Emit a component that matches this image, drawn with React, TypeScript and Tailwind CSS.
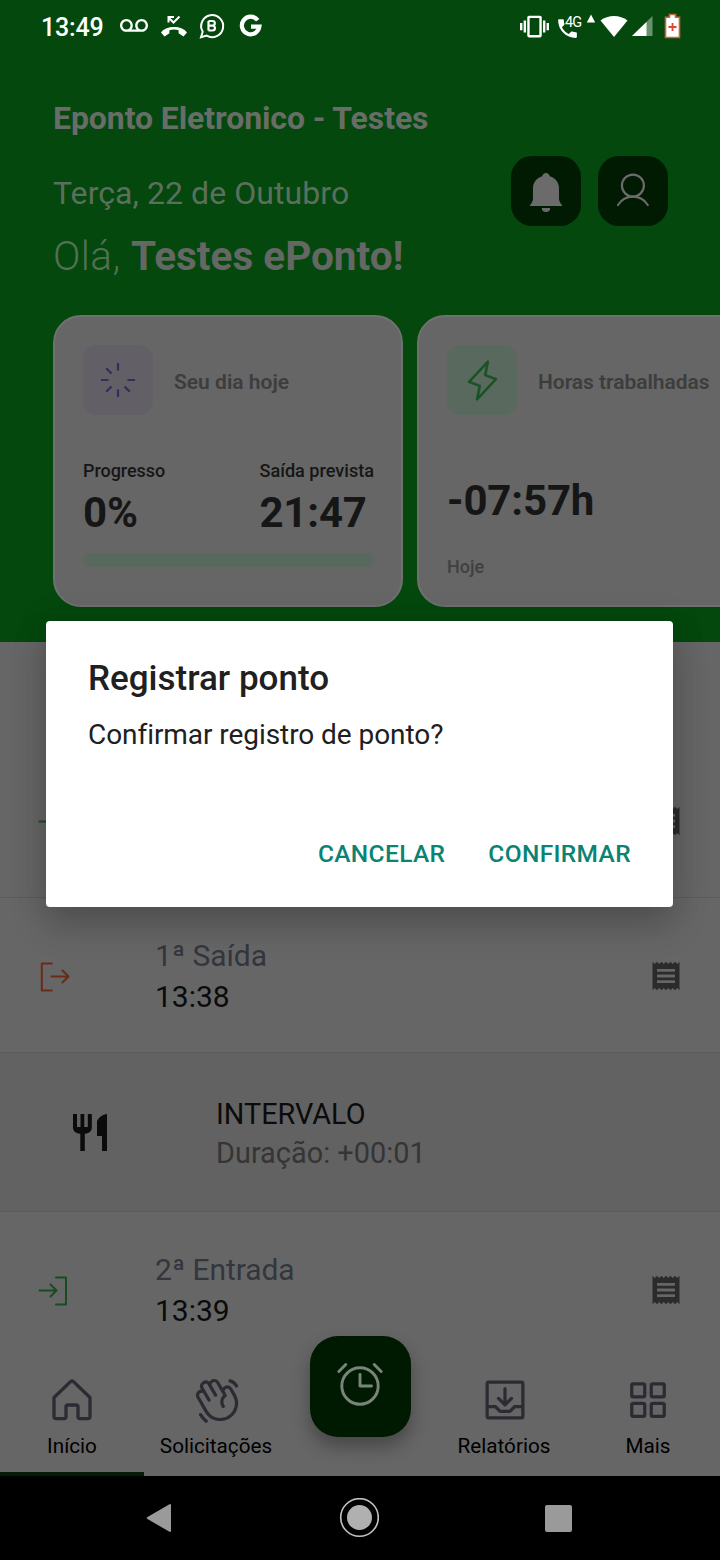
import type { ReactNode } from "react";
import {
  PiHandWaving,
  PiLightningLight,
  PiSquaresFour,
  PiTrayArrowDown,
} from "react-icons/pi";
import { MdPhone, MdReceipt, MdVibration, MdVoicemail } from "react-icons/md";

function StatusBar() {
  return (
    <div className="flex h-[52px] shrink-0 items-center pl-[41px] pr-[39px] text-white">
      <span className="w-[79px] pt-[4px] text-[25px] font-medium leading-[30px] tracking-[-0.15px]">13:49</span>
      <MdVoicemail className="size-[28px]" />
      <svg className="ml-[12px] size-[28px]" viewBox="0 0 28 28" fill="none">
        <path d="M1 20.500C6 13.200 22 13.200 27 20.500l-3.500 4-4.900-3.200v-3c-3-1-6.200-1-9.200 0v3l-4.900 3.200z" fill="currentColor" />
        <path d="M8.500 5.500l5 5 6-6M8.500 10.500V5h5.500" stroke="currentColor" strokeWidth="2" />
      </svg>
      <svg className="ml-[10px] size-[28px]" viewBox="0 0 28 28" fill="none" stroke="currentColor">
        <path d="M3 25.200l1.700-5.500a11 11 0 1 1 3.900 3.900z" strokeWidth="2" />
        <path d="M10.500 9v9.500M10.500 9h4a2.300 2.300 0 0 1 0 4.600h-4M14.500 13.600a2.450 2.450 0 0 1 0 4.900h-4" strokeWidth="2.200" />
      </svg>
      <svg className="ml-[13px] size-[24px]" viewBox="0 0 24 24" fill="none" stroke="currentColor" strokeWidth="4.200">
        <path d="M18.700 6.200A8.800 8.800 0 1 0 20.400 12.600H12" />
      </svg>
      <div className="flex-1" />
      <MdVibration className="size-[29px]" />
      <div className="relative ml-[7px] h-[28px] w-[27px]">
        <MdPhone className="absolute -left-[1px] top-[4px] size-[25px]" />
        <span className="absolute left-[9px] top-[2px] text-[14.500px] leading-[18px] tracking-[-1px]">4G</span>
      </div>
      <svg className="ml-[3px] h-[28px] w-[10px]" viewBox="0 0 10 28" fill="currentColor">
        <path d="M5 2.500l4.200 8H.8z" />
      </svg>
      <svg className="ml-[4px] h-[24px] w-[28px]" viewBox="0 0 28 24" fill="currentColor">
        <path d="M.5 6.500C8 .5 20 .5 27.500 6.500L14 23z" />
      </svg>
      <svg className="ml-[4px] h-[22px] w-[21px]" viewBox="0 0 21 22" fill="currentColor">
        <path d="M0 21L20.500 1v20z" opacity=".4" />
        <path d="M0 21L14.500 7v14z" />
      </svg>
      <svg className="ml-[11px] h-[26px] w-[17px]" viewBox="0 0 17 26">
        <path d="M5.500 1.500h6v2.800h4v20.200h-14V4.300h4z" fill="#fff" stroke="#c9653a" strokeWidth="1.600" />
        <path d="M8.500 10v8M4.500 14h8" stroke="#e0442c" strokeWidth="1.800" />
      </svg>
    </div>
  );
}

function RoundButton({ children }: { children: ReactNode }) {
  return (
    <button className="flex size-[70px] items-center justify-center rounded-[21px] bg-[#011a02] text-[#6b6b6b]">
      {children}
    </button>
  );
}

function Header() {
  return (
    <div className="h-[642px] shrink-0 overflow-hidden bg-[#04480e]">
      <StatusBar />
      <h1 className="ml-[53px] mt-[46px] text-[32px] font-bold leading-[40px] tracking-[-0.09px] text-[#686d68]">
        Eponto Eletronico - Testes
      </h1>
      <div className="mt-[18px] flex h-[125px] items-start pl-[53px] pr-[52px]">
        <div className="flex-1 pt-[17px]">
          <p className="text-[32px] leading-[40px] tracking-[0.07px] text-[#5c6f5e]">Terça, 22 de Outubro</p>
          <p className="mt-[18px] whitespace-nowrap text-[40.500px] leading-[50px] text-[#646764]">
            <span className="font-light tracking-[0.4px] text-[#527055]">Olá, </span>
            <b>Testes ePonto!</b>
          </p>
        </div>
        <div className="flex gap-[17px]">
          <RoundButton>
            <svg className="size-[42px]" viewBox="0 0 42 42" fill="currentColor">
              <path d="M21 3c2 0 3.400 1.300 3.800 3.200 5.600 1.700 9.200 6.200 9.200 12.300v10c0 3.200 1.500 4.300 3.500 7.500h-33C6.500 32.800 8 31.700 8 28.500v-10c0-6.100 3.600-10.600 9.200-12.300.4-1.900 1.800-3.200 3.800-3.200z" />
              <path d="M16.800 38h8.400a4.200 4 0 0 1-8.400 0z" />
            </svg>
          </RoundButton>
          <RoundButton>
            <svg className="size-[42px]" viewBox="0 0 42 42" fill="none" stroke="currentColor" strokeWidth="2.200" strokeLinecap="round">
              <circle cx="20.900" cy="15.600" r="11" />
              <path d="M6 35C9.500 29.500 14.500 26.700 20.900 26.700S32.300 29.500 35.800 35" />
            </svg>
          </RoundButton>
        </div>
      </div>
      <div className="mt-[34px] flex gap-[14px] pl-[53px]">
        <section className="h-[292px] w-[350px] shrink-0 rounded-[28px] border-2 border-[#6f706f] bg-[#666] pl-[28px] pr-[27px] pt-[28px] text-[#161616]">
          <div className="flex items-center gap-[21px]">
            <div className="flex size-[70px] items-center justify-center rounded-[14px] bg-[#625f67]">
              <svg className="size-[36px]" viewBox="0 0 36 36" stroke="#332e5a" strokeWidth="2.200">
                <path d="M18 1v7.500M18 27.500V35M1 18h7.500M27.500 18H35M6.200 6.200l5.300 5.300M24.500 24.500l5.300 5.300M6.200 29.800l5.300-5.300" />
              </svg>
            </div>
            <h2 className="pt-[3px] text-[21px] font-semibold leading-[26px] text-[#3d3d3d]">Seu dia hoje</h2>
          </div>
          <div className="mt-[44px] flex justify-between">
            <div>
              <p className="text-[18px] font-medium leading-[24px] tracking-[-0.06px]">Progresso</p>
              <p className="mt-[5px] text-[42px] font-bold leading-[50px]">0%</p>
            </div>
            <div>
              <p className="text-[18.100px] font-medium leading-[24px]">Saída prevista</p>
              <p className="mt-[5px] text-[42px] font-bold leading-[50px] tracking-[-0.2px]">21:47</p>
            </div>
          </div>
          <div className="mt-[15px] h-[14px] rounded-full bg-[#59695d]" />
        </section>
        <section className="h-[292px] w-[350px] shrink-0 rounded-[28px] border-2 border-[#6f706f] bg-[#666] px-[28px] pt-[28px]">
          <div className="flex items-center gap-[21px]">
            <div className="flex size-[70px] items-center justify-center rounded-[14px] bg-[#59695d]">
              <PiLightningLight className="size-[43px] text-[#165222]" strokeWidth={3} />
            </div>
            <h2 className="whitespace-nowrap pt-[3px] text-[21px] font-semibold leading-[26px] tracking-[-0.04px] text-[#3d3d3d]">
              Horas trabalhadas
            </h2>
          </div>
          <p className="mt-[61px] text-[42px] font-bold leading-[50px] tracking-[-0.15px] text-[#161616]">-07:57h</p>
          <p className="mt-[29px] text-[18px] font-medium leading-[24px] text-[#404040]">Hoje</p>
        </section>
      </div>
    </div>
  );
}

function EntryIcon() {
  return (
    <svg className="mt-[2px] h-[30px] w-[30px]" viewBox="0 0 30 30" fill="none" stroke="#174d20" strokeWidth="2" strokeLinecap="round" strokeLinejoin="round">
      <path d="M1.500 14.500h17M12.500 8.500l6 6-6 6M18 1.500h10v27h-10" />
    </svg>
  );
}

function ExitIcon() {
  return (
    <svg className="ml-[2px] mt-[2px] h-[30px] w-[30px]" viewBox="0 0 30 30" fill="none" stroke="#6b2a18" strokeWidth="2" strokeLinecap="round" strokeLinejoin="round">
      <path d="M11.800 1.500h-10v27h10M11.500 14.500h17M22.500 8.500l6 6-6 6" />
    </svg>
  );
}

function Punch({ label, time, icon, className }: { label: string; time: string; icon: ReactNode; className: string }) {
  return (
    <div className={"flex shrink-0 items-center border-b border-[#5b5b5b] pl-[38px] pr-[38px] " + className}>
      <div className="w-[117px]">{icon}</div>
      <div className="flex-1 text-[30px] leading-[41px] text-[#0b0b0b]">
        <p className="tracking-[-0.08px] text-[#33363d]">{label}</p>
        <p>{time}</p>
      </div>
      <MdReceipt className="-mr-[2px] h-[34px] w-[36px] text-[#2b2b2b]" preserveAspectRatio="none" />
    </div>
  );
}

function Tab({ label, children, active }: { label: string; children: ReactNode; active?: boolean }) {
  return (
    <div className="flex h-full w-[144px] flex-col items-center pt-[19px] text-[#2b2b34]">
      {children}
      <span className="mt-[7px] text-[20.700px] leading-[27px] text-black">{label}</span>
      <div className={active ? "mt-auto h-[4px] w-full bg-[#051a07]" : "hidden"} />
    </div>
  );
}

function TabBar() {
  return (
    <div className="flex h-[121px] shrink-0 bg-[#666]">
      <Tab label="Início" active>
        <svg className="size-[52px]" viewBox="0 0 52 52" fill="none" stroke="currentColor" strokeWidth="3.300" strokeLinejoin="round">
          <path d="M8 23.500L24.500 7.600a2.200 2.200 0 0 1 3 0L44 23.500v19.300a1.800 1.800 0 0 1-1.800 1.800H33.600a1.600 1.600 0 0 1-1.600-1.600V33a2 2 0 0 0-2-2h-8a2 2 0 0 0-2 2v10a1.600 1.600 0 0 1-1.600 1.600H9.800A1.800 1.800 0 0 1 8 42.800z" />
        </svg>
      </Tab>
      <Tab label="Solicitações">
        <PiHandWaving className="ml-[2px] size-[52px]" />
      </Tab>
      <div className="relative w-[144px]">
        <button className="absolute -top-[19px] left-[22px] flex size-[101px] items-center justify-center rounded-[28px] bg-[#001a01] text-[#7a857a] shadow-[0_10px_18px_rgba(0,0,0,0.3)]">
          <svg className="-ml-[1px] -mt-[5px] size-[50px]" viewBox="0 0 50 50" fill="none" stroke="currentColor" strokeWidth="2.900" strokeLinecap="round" strokeLinejoin="round">
            <circle cx="25" cy="27" r="18.200" />
            <path d="M25 15.500V27h11.500M3.800 12.500l7-7M39.200 5.500l7 7" />
          </svg>
        </button>
      </div>
      <Tab label="Relatórios">
        <PiTrayArrowDown className="ml-[1px] size-[52px]" />
      </Tab>
      <Tab label="Mais">
        <PiSquaresFour className="size-[52px]" />
      </Tab>
    </div>
  );
}

function SystemNav() {
  return (
    <div className="flex h-[84px] shrink-0 items-center bg-black text-[#9a9a9a]">
      <svg className="ml-[146px] h-[30px] w-[26px]" viewBox="0 0 26 30" fill="currentColor">
        <path d="M1.500 14L23.500 1.200q1.500-.7 1.500 1v25.600q0 1.700-1.500 1L1.500 16q-1.600-1 0-2z" />
      </svg>
      <svg className="ml-[167px] size-[40px]" viewBox="0 0 40 40">
        <circle cx="20.500" cy="19.500" r="18.800" fill="none" stroke="#c4c4c4" strokeWidth="1.600" />
        <circle cx="20.500" cy="19.500" r="12.500" fill="#b0b0b0" />
      </svg>
      <div className="ml-[166px] size-[27px] rounded-[2px] bg-[#9a9a9a]" />
    </div>
  );
}

function ConfirmDialog() {
  return (
    <div
      role="dialog"
      className="absolute left-[46px] top-[621px] flex h-[286px] w-[627px] flex-col rounded-[4px] bg-white pl-[42px] pr-[42px] pt-[36px] shadow-[0_18px_36px_rgba(0,0,0,0.2),0_0_36px_rgba(0,0,0,0.1)]"
    >
      <h2 className="text-[35px] font-medium leading-[44px] text-[#202020]">Registrar ponto</h2>
      <p className="mt-[16px] text-[28px] leading-[36px] tracking-[-0.06px] text-[#202020]">Confirmar registro de ponto?</p>
      <div className="mt-[84px] flex justify-end gap-[43px] text-[24.500px] font-medium leading-[34px] tracking-[0.36px] text-[#0b8372]">
        <button>CANCELAR</button>
        <button>CONFIRMAR</button>
      </div>
    </div>
  );
}

export default function App() {
  return (
    <div className="relative flex h-[1560px] w-[720px] flex-col overflow-hidden bg-[#666] font-['Roboto',sans-serif]">
      <Header />
      <div className="flex h-[713px] shrink-0 flex-col">
        <Punch label="1ª Entrada" time="13:37" icon={<EntryIcon />} className="h-[256px] pt-[103px]" />
        <Punch label="1ª Saída" time="13:38" icon={<ExitIcon />} className="h-[155px] pt-[2px]" />
        <div className="flex h-[159px] shrink-0 items-center border-b border-[#5b5b5b] bg-[#626262] pl-[72px] pt-[2px]">
          <svg className="h-[40px] w-[36px]" viewBox="0 0 36 40" fill="#0b0b0b">
            <path d="M1 1h4v13h3.500V1h3.800v13h3.500V1h4v13.500c0 3.600-2.700 6-7 6.300V38H8.300V20.800C3.800 20.500 1 18.100 1 14.500z" />
            <path d="M35 1v37h-5V23h-5V8c2-4 5.500-6.500 10-7z" />
          </svg>
          <div className="ml-[108px] pt-[2px]">
            <p className="text-[28.800px] leading-[39px] text-[#0b0b0b]">INTERVALO</p>
            <p className="text-[28.900px] leading-[39px] text-[#353535]">Duração: +00:01</p>
          </div>
        </div>
        <div className="flex h-[143px] shrink-0 flex-col overflow-hidden">
          <Punch label="2ª Entrada" time="13:39" icon={<EntryIcon />} className="h-[157px]" />
        </div>
      </div>
      <TabBar />
      <SystemNav />
      <ConfirmDialog />
    </div>
  );
}
